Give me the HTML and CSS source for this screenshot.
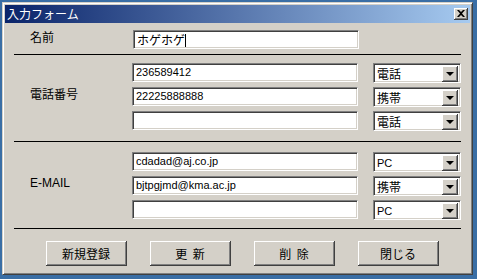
FILE: index.html
```html
<!DOCTYPE html>
<html lang="ja">
<head>
    <meta charset="UTF-8">
    <title>入力フォーム</title>
    <link rel="stylesheet" href="styles.css">
</head>
<body>

    <div class="window">
        <div class="titlebar">
            <span class="title">入力フォーム</span>
            <span class="close-btn">
                <svg width="8" height="7" viewBox="0 0 8 7"><path d="M0 0h2l2 2 2-2h2L5 3.5 8 7H6L4 5 2 7H0l3-3.5z" fill="#000"/></svg>
            </span>
        </div>

        <div class="client">
            <div class="section sec-name">
                <div class="label">名前</div>
                <div class="rows">
                    <div class="row">
                        <div class="field">ホゲホゲ<span class="caret"></span></div>
                    </div>
                </div>
            </div>

            <div class="divider"></div>

            <div class="section sec-phone">
                <div class="label">電話番号</div>
                <div class="rows">
                    <div class="row">
                        <div class="field latin">236589412</div>
                        <div class="combo"><span class="combo-text">電話</span><span class="drop"><i></i></span></div>
                    </div>
                    <div class="row">
                        <div class="field latin">22225888888</div>
                        <div class="combo"><span class="combo-text">携帯</span><span class="drop"><i></i></span></div>
                    </div>
                    <div class="row">
                        <div class="field latin"></div>
                        <div class="combo"><span class="combo-text">電話</span><span class="drop"><i></i></span></div>
                    </div>
                </div>
            </div>

            <div class="divider"></div>

            <div class="section sec-mail">
                <div class="label latin-label">E-MAIL</div>
                <div class="rows">
                    <div class="row">
                        <div class="field latin">cdadad@aj.co.jp</div>
                        <div class="combo"><span class="combo-text latin">PC</span><span class="drop"><i></i></span></div>
                    </div>
                    <div class="row">
                        <div class="field latin">bjtpgjmd@kma.ac.jp</div>
                        <div class="combo"><span class="combo-text">携帯</span><span class="drop"><i></i></span></div>
                    </div>
                    <div class="row">
                        <div class="field latin"></div>
                        <div class="combo"><span class="combo-text latin">PC</span><span class="drop"><i></i></span></div>
                    </div>
                </div>
            </div>

            <div class="divider"></div>

            <div class="buttons">
                <button class="btn">新規登録</button>
                <button class="btn">更&nbsp;&nbsp;新</button>
                <button class="btn">削&nbsp;&nbsp;除</button>
                <button class="btn">閉じる</button>
            </div>
        </div>
    </div>

</body>
</html>
```

FILE: styles.css
```css
body {
    margin: 0;
    padding: 2px 0 0 2px;
    background-color: #3a6ea5;
    font-family: "Noto Sans CJK JP", sans-serif;
    font-size: 12px;
    color: #000;
}

.window {
    box-sizing: border-box;
    width: 471px;
    height: 273px;
    background-color: #d4d0c8;
    border-top: 1px solid #d4d0c8;
    border-left: 1px solid #d4d0c8;
    border-right: 1px solid #404040;
    border-bottom: 1px solid #404040;
    box-shadow: inset 1px 1px 0 #fff, inset -1px -1px 0 #808080;
    padding: 2px;
}

.titlebar {
    height: 18px;
    display: flex;
    align-items: center;
    justify-content: space-between;
    background: linear-gradient(to right, #0a246a, #a6caf0);
    color: #fff;
    padding: 0 2px 0 2px;
}

.title {
    font-size: 12px;
    line-height: 18px;
}

.close-btn {
    box-sizing: border-box;
    width: 14px;
    height: 12px;
    display: flex;
    align-items: center;
    justify-content: center;
    background-color: #d4d0c8;
    border-right: 1px solid #404040;
    border-bottom: 1px solid #404040;
    box-shadow: inset 1px 1px 0 #fff, inset -1px -1px 0 #808080;
}

.client {
    padding: 0 9px;
}

.divider {
    height: 1px;
    background-color: #000;
}

.section {
    display: flex;
    align-items: center;
}

.sec-name {
    padding: 7px 0 4px;
}

.sec-phone {
    padding: 8px 0 10px;
}

.sec-mail {
    padding: 10px 0 8px;
}

.label {
    width: 103px;
    padding-left: 16px;
    margin-bottom: 6px;
    line-height: 14px;
}

.latin-label {
    font-family: "Liberation Sans", sans-serif;
}

.rows {
    display: flex;
    flex-direction: column;
    gap: 4px;
}

.row {
    display: flex;
    gap: 15px;
    height: 20px;
}

.field {
    box-sizing: border-box;
    width: 226px;
    height: 19px;
    background-color: #fff;
    border-top: 1px solid #808080;
    border-left: 1px solid #808080;
    border-right: 1px solid #fff;
    border-bottom: 1px solid #fff;
    box-shadow: inset 1px 1px 0 #404040, inset -1px -1px 0 #d4d0c8;
    padding: 0 3px;
    line-height: 17px;
    white-space: nowrap;
    overflow: hidden;
}

.latin {
    font-family: "Liberation Sans", sans-serif;
    font-size: 11px;
}

.caret {
    display: inline-block;
    width: 1px;
    height: 13px;
    background-color: #000;
    vertical-align: -2px;
}

.combo {
    box-sizing: border-box;
    width: 88px;
    height: 20px;
    display: flex;
    background-color: #fff;
    border-top: 1px solid #808080;
    border-left: 1px solid #808080;
    border-right: 1px solid #fff;
    border-bottom: 1px solid #fff;
    box-shadow: inset 1px 1px 0 #404040, inset -1px -1px 0 #d4d0c8;
    padding: 2px;
}

.combo-text {
    flex: 1;
    line-height: 16px;
    padding-left: 1px;
}

.drop {
    box-sizing: border-box;
    width: 16px;
    height: 16px;
    display: flex;
    align-items: center;
    justify-content: center;
    background-color: #d4d0c8;
    border-right: 1px solid #404040;
    border-bottom: 1px solid #404040;
    box-shadow: inset 1px 1px 0 #fff, inset -1px -1px 0 #808080;
}

.drop i {
    width: 0;
    height: 0;
    border-left: 4px solid transparent;
    border-right: 4px solid transparent;
    border-top: 4px solid #000;
    margin-top: 1px;
}

.buttons {
    display: flex;
    gap: 23px;
    padding: 12px 0 0 32px;
}

.btn {
    box-sizing: border-box;
    width: 81px;
    height: 25px;
    padding: 0;
    font-family: "Noto Sans CJK JP", sans-serif;
    font-size: 12px;
    color: #000;
    background-color: #d4d0c8;
    border: none;
    border-right: 1px solid #404040;
    border-bottom: 1px solid #404040;
    box-shadow: inset 1px 1px 0 #fff, inset -1px -1px 0 #808080;
}
```
